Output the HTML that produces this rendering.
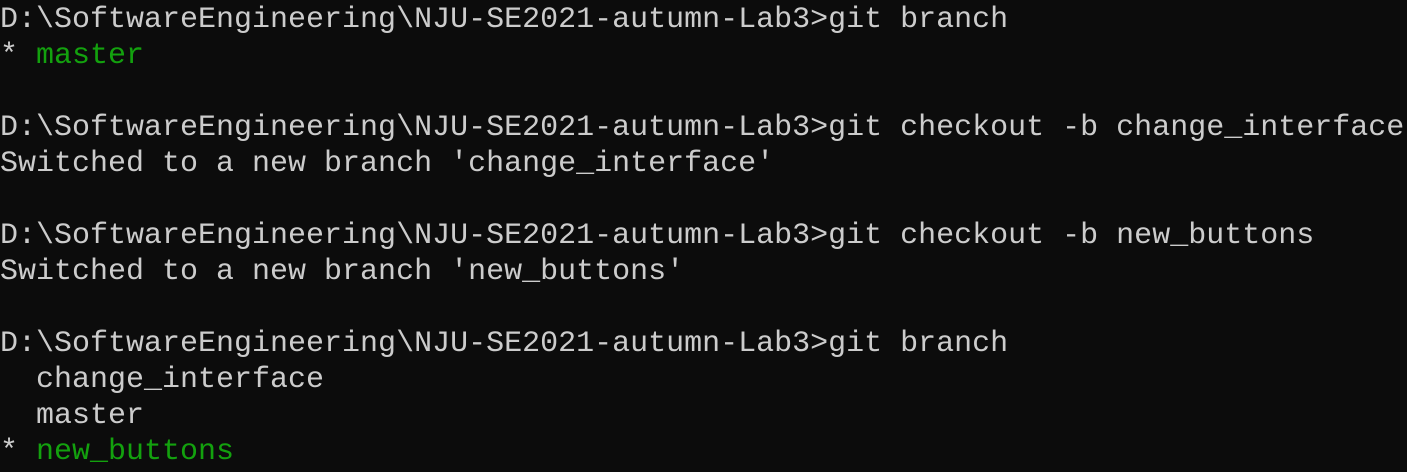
<!DOCTYPE html>
<html><head><style>
html,body{margin:0;padding:0;background:#0c0c0c;width:1407px;height:472px;overflow:hidden}
pre{margin:0;padding:2px 0 0 0;font-family:"Liberation Mono",monospace;font-size:30px;letter-spacing:0px;line-height:36px;color:#cccccc;white-space:pre}
.g{color:#13a10e}
</style></head><body><pre>D:\SoftwareEngineering\NJU-SE2021-autumn-Lab3>git branch
* <span class="g">master</span>

D:\SoftwareEngineering\NJU-SE2021-autumn-Lab3>git checkout -b change_interface
Switched to a new branch 'change_interface'

D:\SoftwareEngineering\NJU-SE2021-autumn-Lab3>git checkout -b new_buttons
Switched to a new branch 'new_buttons'

D:\SoftwareEngineering\NJU-SE2021-autumn-Lab3>git branch
  change_interface
  master
* <span class="g">new_buttons</span></pre></body></html>
